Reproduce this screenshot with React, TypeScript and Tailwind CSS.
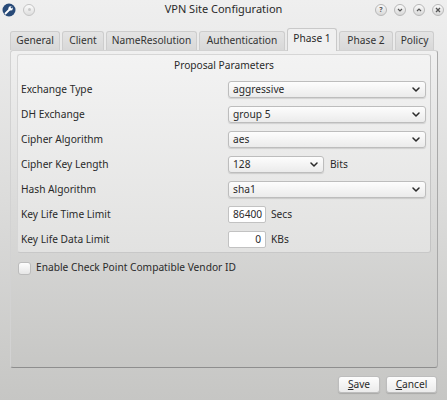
import { ReactNode } from 'react';

const tabs = [
  { label: 'General', w: 'w-[50px]' },
  { label: 'Client', w: 'w-[42px]' },
  { label: 'NameResolution', w: 'w-[91px]' },
  { label: 'Authentication', w: 'w-[86px]' },
  { label: 'Phase 1', w: 'w-[50px]', active: true },
  { label: 'Phase 2', w: 'w-[54px]' },
  { label: 'Policy', w: 'w-[39px]' },
];

function Chevron() {
  return (
    <svg width="8" height="5" viewBox="0 0 8 5" className="shrink-0">
      <path d="M1 1 L4 4 L7 1" fill="none" stroke="#2a2a2a" strokeWidth="1.5" strokeLinecap="round" strokeLinejoin="round" />
    </svg>
  );
}

function Combo({ value, w = 'w-[198px]' }: { value: string; w?: string }) {
  return (
    <div
      className={`${w} h-[17px] flex items-center justify-between pl-[4px] pr-[5px] rounded-[3px] border border-[#bdbdbd] bg-gradient-to-b from-[#fdfdfd] to-[#ebebeb] shadow-[0_1px_1px_rgba(0,0,0,0.12)]`}
    >
      <span>{value}</span>
      <Chevron />
    </div>
  );
}

function NumField({ value, right }: { value: string; right?: boolean }) {
  return (
    <div
      className={`w-[38px] h-[17px] flex items-center px-[4px] rounded-[2px] border border-[#c2c2c2] bg-white ${right ? 'justify-end' : ''}`}
    >
      {value}
    </div>
  );
}

function Row({ label, children }: { label: string; children: ReactNode }) {
  return (
    <div className="h-[25px] flex items-center">
      <div className="w-[210px] pl-[3px]">{label}</div>
      {children}
    </div>
  );
}

function TitleButton({ children }: { children: ReactNode }) {
  return (
    <div className="w-[12px] h-[12px] rounded-full border border-[#b8b8b8] bg-gradient-to-b from-[#fafafa] to-[#d8d8d8] flex items-center justify-center text-[7px] leading-none text-[#555] font-bold">
      {children}
    </div>
  );
}

export default function App() {
  return (
    <div
      className="w-[447px] h-[400px] overflow-hidden flex flex-col bg-gradient-to-b from-[#efefef] via-[#dcdcdb] to-[#c6c6c4] text-[10.2px] text-[#2a2a2a]"
      style={{ fontFamily: '"Noto Sans", "Open Sans", sans-serif' }}
    >
      {/* title bar */}
      <div className="h-[19px] grid grid-cols-[1fr_auto_1fr] items-center px-[2px]">
        <div className="flex items-center">
          <svg width="14" height="14" viewBox="0 0 14 14">
            <circle cx="7" cy="7" r="6.5" fill="#284a78" />
            <path d="M3.5 10.5 L7.5 6.5" stroke="#fff" strokeWidth="1.8" strokeLinecap="round" />
            <circle cx="8.6" cy="5.4" r="2.2" fill="#fff" />
            <circle cx="9.6" cy="4.4" r="0.9" fill="#284a78" />
          </svg>
          <div className="ml-[7px] w-[12px] h-[12px] rounded-full border border-[#c4c4c4] bg-gradient-to-b from-[#fbfbfb] to-[#dedede] flex items-center justify-center">
            <div className="w-[3px] h-[3px] rounded-full bg-[#c8c8c8]" />
          </div>
        </div>
        <div className="text-[11px] text-[#2a2a2a]">VPN Site Configuration</div>
        <div className="flex items-center justify-end gap-[7px] pr-[1px]">
          <TitleButton>?</TitleButton>
          <TitleButton>
            <svg width="6" height="4" viewBox="0 0 6 4"><path d="M1 1 L3 3 L5 1" fill="none" stroke="#555" strokeWidth="1.2" /></svg>
          </TitleButton>
          <TitleButton>
            <svg width="6" height="4" viewBox="0 0 6 4"><path d="M1 3 L3 1 L5 3" fill="none" stroke="#555" strokeWidth="1.2" /></svg>
          </TitleButton>
          <TitleButton>
            <svg width="6" height="6" viewBox="0 0 6 6"><path d="M1 1 L5 5 M5 1 L1 5" fill="none" stroke="#555" strokeWidth="1.3" /></svg>
          </TitleButton>
        </div>
      </div>

      {/* tab bar */}
      <div className="h-[31px] flex items-end gap-[2px] pl-[10px] relative z-10">
        {tabs.map(t =>
          t.active ? (
            <div
              key={t.label}
              className={`${t.w} h-[23px] -mb-px flex items-center justify-center rounded-t-[3px] border border-b-0 border-[#c9c9c9] bg-[#f0f0f0] pb-[2px]`}
            >
              {t.label}
            </div>
          ) : (
            <div
              key={t.label}
              className={`${t.w} h-[19px] flex items-center justify-center rounded-t-[3px] border border-b-0 border-[#cdcdcd] bg-gradient-to-b from-[#e4e4e4] to-[#d8d8d8] text-[#333]`}
            >
              {t.label}
            </div>
          )
        )}
      </div>

      {/* tab pane */}
      <div className="ml-[10px] w-[428px] h-[318px] rounded-[3px] border border-[#d2d2d2] border-b-[#8e8e8e] border-r-[#a9a9a9] bg-gradient-to-b from-[#f0f0f0] via-[#dadad9] to-[#c7c7c5] px-[6px] pt-[3px]">
        <div className="h-[199px] rounded-[3px] border border-[#d6d6d6] border-r-[#c4c4c4] border-b-[#c8c8c8] bg-gradient-to-b from-[#f3f3f3] to-[#e2e2e1] flex flex-col">
          <div className="h-[22px] flex items-center justify-center">Proposal Parameters</div>
          <Row label="Exchange Type">
            <Combo value="aggressive" />
          </Row>
          <Row label="DH Exchange">
            <Combo value="group 5" />
          </Row>
          <Row label="Cipher Algorithm">
            <Combo value="aes" />
          </Row>
          <Row label="Cipher Key Length">
            <Combo value="128" w="w-[96px]" />
            <span className="ml-[6px]">Bits</span>
          </Row>
          <Row label="Hash Algorithm">
            <Combo value="sha1" />
          </Row>
          <Row label="Key Life Time Limit">
            <NumField value="86400" />
            <span className="ml-[5px]">Secs</span>
          </Row>
          <Row label="Key Life Data Limit">
            <NumField value="0" right />
            <span className="ml-[5px]">KBs</span>
          </Row>
        </div>
        <div className="h-[28px] flex items-center pl-[1px] mt-[1px]">
          <div className="w-[13px] h-[13px] rounded-[3px] border border-[#bcbcbc] bg-gradient-to-b from-[#fdfdfd] to-[#e6e6e6]" />
          <span className="ml-[5px]">Enable Check Point Compatible Vendor ID</span>
        </div>
      </div>

      {/* dialog buttons */}
      <div className="flex justify-end gap-[6px] pr-[10px] mt-[8px]">
        <button className="w-[42px] h-[17px] rounded-[3px] border border-[#bdbdbd] bg-gradient-to-b from-[#fdfdfd] to-[#ebebeb] shadow-[0_1px_1px_rgba(0,0,0,0.15)] leading-none">
          <span className="underline underline-offset-1">S</span>ave
        </button>
        <button className="w-[51px] h-[17px] rounded-[3px] border border-[#bdbdbd] bg-gradient-to-b from-[#fdfdfd] to-[#ebebeb] shadow-[0_1px_1px_rgba(0,0,0,0.15)] leading-none">
          <span className="underline underline-offset-1">C</span>ancel
        </button>
      </div>
    </div>
  );
}
